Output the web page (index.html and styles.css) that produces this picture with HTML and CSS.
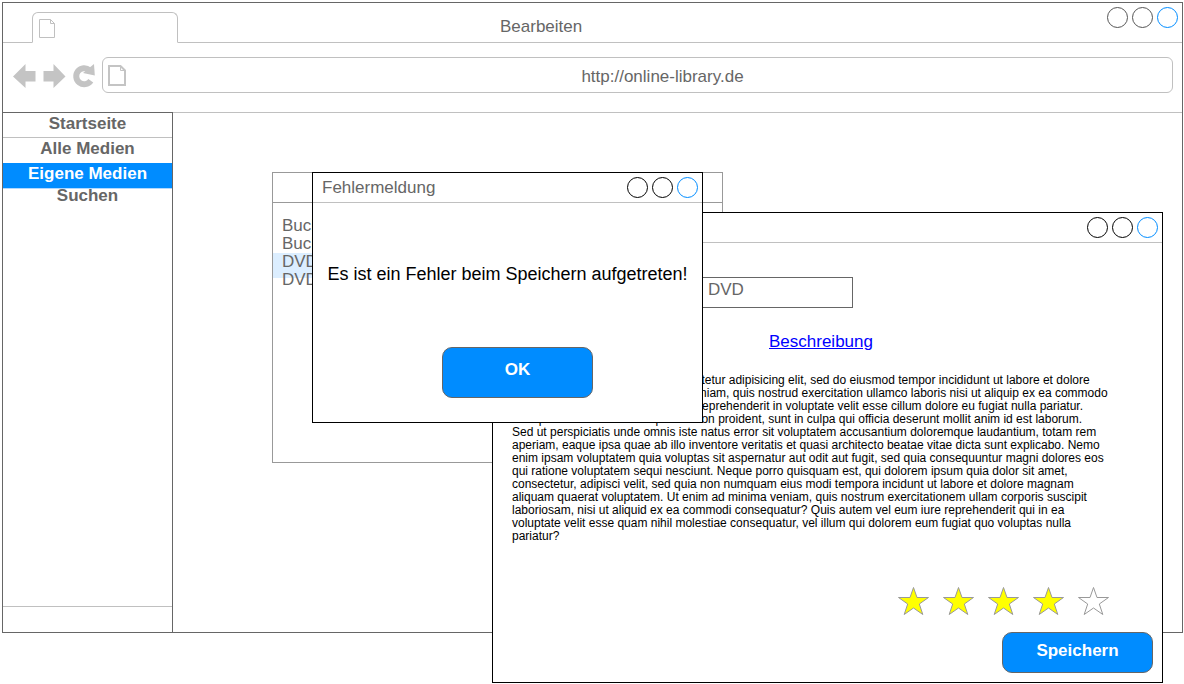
FILE: index.html
```
<!DOCTYPE html>
<html lang="de">
<head>
<meta charset="utf-8">
<title>Bearbeiten</title>
<link rel="stylesheet" href="styles.css">
</head>
<body>
<div class="desktop">
  <div class="browser">
    <header class="tab-bar">
      <div class="tab">
        <svg class="tab-icon" width="16" height="19" viewBox="0 0 16 19" fill="none" stroke="#c0c0c0"><path d="M.5.5H11.500L15.500 4.500V18.500H.5ZM11.500.5V4.500H15.500"/></svg>
      </div>
      <h1 class="browser-title">Bearbeiten</h1>
      <div class="controls controls-muted">
        <button class="control" aria-label="Minimieren"></button>
        <button class="control" aria-label="Maximieren"></button>
        <button class="control control-close" aria-label="Schließen"></button>
      </div>
    </header>
    <div class="toolbar">
      <button class="tool" aria-label="Zurück"><svg width="24" height="26" viewBox="0 -2 24 26" fill="#c4c4c4"><path d="M1 12.500 13.500 0V7H23.500V17.500H13.500V24Z"/></svg></button>
      <button class="tool" aria-label="Vorwärts"><svg width="24" height="26" viewBox="0 -2 24 26" fill="#c4c4c4"><path d="M23.500 12.500 11.500 0V7H1.500V17.500H11.500V24Z"/></svg></button>
      <button class="tool" aria-label="Neu laden"><svg width="24" height="26" viewBox="0 -2 24 26"><path d="M18.800 16.800A8 8 0 1 1 17.500 6.200" fill="none" stroke="#c4c4c4" stroke-width="6"/><path d="M22 0 22.800 11.500 11 9Z" fill="#c4c4c4"/></svg></button>
      <div class="address">
        <svg width="18" height="21" viewBox="0 0 18 21" fill="none" stroke="#c4c4c4" stroke-width="2"><path d="M1 1H12.500L17 5.500V20H1Z"/><path d="M12.500 1V5.500H17" stroke-width="1"/></svg>
        <input class="address-input" type="text" aria-label="Adresse" value="http://online-library.de">
      </div>
    </div>
    <div class="page">
      <nav class="sidebar">
        <a class="nav-item nav-ruled" href="#">Startseite</a>
        <a class="nav-item" href="#">Alle Medien</a>
        <a class="nav-item nav-active" href="#">Eigene Medien</a>
        <a class="nav-item nav-tight" href="#">Suchen</a>
        <div class="sidebar-foot"></div>
      </nav>
    </div>
  </div>

  <section class="window list-window" aria-label="Medienliste">
    <div class="window-bar"></div>
    <ul class="media-list">
      <li>Buch</li>
      <li>Buch</li>
      <li class="media-selected">DVD</li>
      <li>DVD</li>
    </ul>
  </section>

  <section class="window edit-window" aria-label="Medium bearbeiten">
    <div class="window-bar">
      <div class="controls">
        <button class="control" aria-label="Minimieren"></button>
        <button class="control" aria-label="Maximieren"></button>
        <button class="control control-close" aria-label="Schließen"></button>
      </div>
    </div>
    <div class="edit-body">
      <input class="kind-input" type="text" aria-label="Medium" value="DVD">
      <a class="description-link" href="#">Beschreibung</a>
      <p class="description">Lorem ipsum dolor sit amet, consectetur adipisicing elit, sed do eiusmod tempor incididunt ut labore et dolore<br>
      magna aliqua. Ut enim ad minim veniam, quis nostrud exercitation ullamco laboris nisi ut aliquip ex ea commodo<br>
      consequat. Duis aute irure dolor in reprehenderit in voluptate velit esse cillum dolore eu fugiat nulla pariatur.<br>
      Excepteur sint occaecat cupidatat non proident, sunt in culpa qui officia deserunt mollit anim id est laborum.<br>
      Sed ut perspiciatis unde omnis iste natus error sit voluptatem accusantium doloremque laudantium, totam rem<br>
      aperiam, eaque ipsa quae ab illo inventore veritatis et quasi architecto beatae vitae dicta sunt explicabo. Nemo<br>
      enim ipsam voluptatem quia voluptas sit aspernatur aut odit aut fugit, sed quia consequuntur magni dolores eos<br>
      qui ratione voluptatem sequi nesciunt. Neque porro quisquam est, qui dolorem ipsum quia dolor sit amet,<br>
      consectetur, adipisci velit, sed quia non numquam eius modi tempora incidunt ut labore et dolore magnam<br>
      aliquam quaerat voluptatem. Ut enim ad minima veniam, quis nostrum exercitationem ullam corporis suscipit<br>
      laboriosam, nisi ut aliquid ex ea commodi consequatur? Quis autem vel eum iure reprehenderit qui in ea<br>
      voluptate velit esse quam nihil molestiae consequatur, vel illum qui dolorem eum fugiat quo voluptas nulla<br>
      pariatur?</p>
      <div class="rating">
        <button class="star" aria-label="1 Stern"><svg class="star-full" width="31" height="30" viewBox="0 0 31 30"><use href="#star"/></svg></button>
        <button class="star" aria-label="2 Sterne"><svg class="star-full" width="31" height="30" viewBox="0 0 31 30"><use href="#star"/></svg></button>
        <button class="star" aria-label="3 Sterne"><svg class="star-full" width="31" height="30" viewBox="0 0 31 30"><use href="#star"/></svg></button>
        <button class="star" aria-label="4 Sterne"><svg class="star-full" width="31" height="30" viewBox="0 0 31 30"><use href="#star"/></svg></button>
        <button class="star" aria-label="5 Sterne"><svg class="star-empty" width="31" height="30" viewBox="0 0 31 30"><path id="star" d="M15.500 1.500 19 11.500H30.500L21.300 18 24.800 28.500 15.500 22 6.200 28.500 9.700 18 .5 11.500H12Z"/></svg></button>
      </div>
      <button class="button save-button">Speichern</button>
    </div>
  </section>

  <section class="window error-window" role="dialog" aria-labelledby="error-title">
    <div class="window-bar">
      <h2 class="window-title" id="error-title">Fehlermeldung</h2>
      <div class="controls">
        <button class="control" aria-label="Minimieren"></button>
        <button class="control" aria-label="Maximieren"></button>
        <button class="control control-close" aria-label="Schließen"></button>
      </div>
    </div>
    <div class="error-body">
      <p class="error-text">Es ist ein Fehler beim Speichern aufgetreten!</p>
      <button class="button ok-button">OK</button>
    </div>
  </section>
</div>
</body>
</html>
```
FILE: styles.css
```
* {
  box-sizing: border-box;
}

body {
  margin: 0;
  background: #fff;
  color: #666;
  font: 17px/20px "Liberation Sans", Arial, sans-serif;
}

h1,
h2,
p,
ul {
  margin: 0;
  padding: 0;
  font: inherit;
  list-style: none;
}

button,
input {
  margin: 0;
  padding: 0;
  border: 0;
  background: none;
  color: inherit;
  font: inherit;
}

svg {
  display: block;
}

.desktop {
  position: relative;
  min-height: 100vh;
  padding: 2px 1px 51px 2px;
}

/* Browser frame */
.browser {
  display: flex;
  flex-direction: column;
  min-height: calc(100vh - 53px);
  border: 1px solid #666;
}

.tab-bar {
  display: flex;
  height: 40px;
  padding-left: 29px;
  border-bottom: 1px solid #c0c0c0;
}

.tab {
  width: 146px;
  margin: 9px 0 -1px;
  padding: 6px;
  border: 1px solid #c0c0c0;
  border-bottom-color: #fff;
  border-radius: 6px 6px 0 0;
  background: #fff;
}

.browser-title {
  flex: 1;
  padding: 14px 0 0 322px;
}

.controls {
  display: flex;
  gap: 4px;
  padding: 4px;
  color: #000;
}

.controls-muted {
  color: #555;
}

.control {
  width: 21px;
  height: 21px;
  border: 1px solid currentColor;
  border-radius: 50%;
}

.control-close {
  border-color: #008cff;
}

.toolbar {
  display: flex;
  align-items: center;
  gap: 6px;
  padding: 14px 9px 19px;
  border-bottom: 1px solid #c0c0c0;
}

.tool {
  width: 24px;
}

.address {
  display: flex;
  flex: 1;
  align-items: center;
  height: 36px;
  padding-left: 5px;
  border: 1px solid #c0c0c0;
  border-radius: 6px;
}

.address-input {
  flex: 1;
  min-width: 0;
  padding: 4px 0 0 27px;
  text-align: center;
}

.page {
  display: flex;
  flex: 1;
}

.sidebar {
  display: flex;
  flex-direction: column;
  width: 170px;
  margin-top: -1px;
  border: solid #666;
  border-width: 1px 1px 0 0;
  font-weight: bold;
  line-height: 22px;
  text-align: center;
}

.nav-item {
  height: 25px;
  color: inherit;
  text-decoration: none;
}

.nav-ruled {
  border-bottom: 1px solid #c0c0c0;
}

.nav-active {
  background: #008cff;
  color: #fff;
}

.nav-tight {
  border-top: 1px solid #b0d8ff;
  line-height: 13px;
}

.sidebar-foot {
  height: 26px;
  margin-top: auto;
  border-top: 1px solid #c0c0c0;
}

/* Floating windows */
.window {
  position: absolute;
  border: 1px solid #000;
  background: #fff;
}

.window-bar {
  display: flex;
  justify-content: flex-end;
  height: 30px;
  border-bottom: 1px solid #c0c0c0;
}

.window-title {
  flex: 1;
  padding: 5px 9px;
}

.list-window {
  top: 172px;
  left: 272px;
  width: 451px;
  min-height: 291px;
  border-color: #999;
}

.list-window .window-bar {
  border-color: #999;
}

.media-list {
  padding-top: 14px;
  line-height: 18px;
}

.media-list li {
  height: 18px;
  padding-left: 9px;
}

.media-list .media-selected {
  height: 25px;
  margin-bottom: -7px;
  background: #dceeff;
}

.edit-window {
  top: 212px;
  left: 492px;
  width: 671px;
}

.edit-body {
  display: flex;
  flex-direction: column;
  padding: 34px 9px 9px 19px;
}

.kind-input {
  width: 151px;
  height: 31px;
  margin-left: 190px;
  padding: 0 5px 6px;
  border: 1px solid #666;
}

.description-link {
  align-self: flex-start;
  margin: 24px 0 0 257px;
  color: #00f;
}

.description {
  margin-top: 22px;
  color: #000;
  font-size: 12px;
  line-height: 13px;
  white-space: nowrap;
}

.rating {
  display: flex;
  align-self: flex-end;
  gap: 14px;
  margin: 43px 44px 0 0;
}

.star-full {
  fill: #ff0;
  stroke: #999;
}

.star-empty {
  fill: none;
  stroke: #999;
}

.button {
  width: 151px;
  border: 1px solid #666;
  border-radius: 10px;
  background: #008cff;
  color: #fff;
  font-weight: bold;
}

.save-button {
  align-self: flex-end;
  height: 41px;
  margin-top: 16px;
  padding-bottom: 4px;
}

.error-window {
  top: 172px;
  left: 312px;
  width: 391px;
}

.error-body {
  display: flex;
  flex-direction: column;
  align-items: center;
  padding: 61px 0 24px;
}

.error-text {
  color: #000;
  font-size: 18px;
}

.ok-button {
  height: 51px;
  margin: 63px 0 0 20px;
  padding-bottom: 5px;
}
```
